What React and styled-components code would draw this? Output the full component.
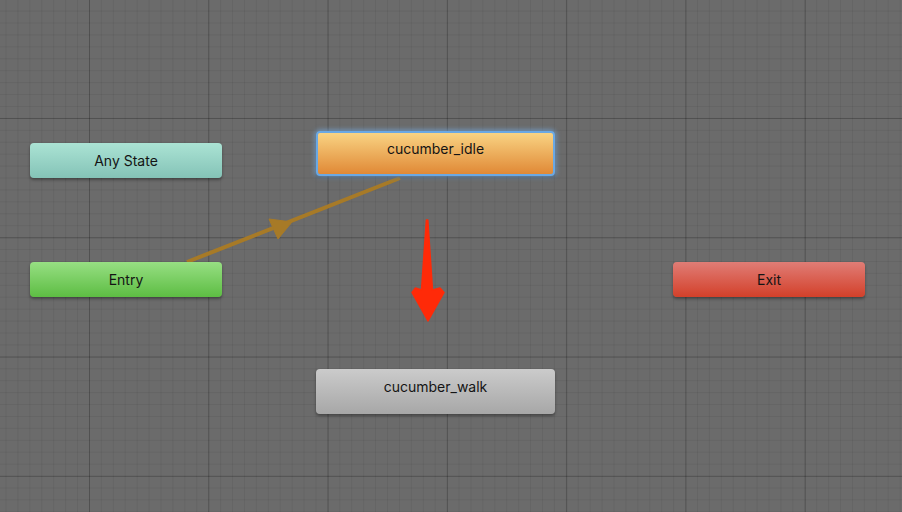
import React from 'react';
import styled, { createGlobalStyle, css } from 'styled-components';

const GlobalStyle = createGlobalStyle`
  html, body {
    margin: 0;
    padding: 0;
    background: #6b6b6b;
  }
  body {
    font-family: "Inter", "Liberation Sans", Arial, sans-serif;
  }
`;

const palettes = {
  any: { top: '#abe3d4', bottom: '#84c3b7' },
  entry: { top: '#97df83', bottom: '#5dbd43' },
  exit: { top: '#e07d76', bottom: '#d3402a' },
  idle: { top: '#f9d383', bottom: '#e08936' },
  walk: { top: '#cbcbcb', bottom: '#a7a7a7' },
};

const Canvas = styled.div`
  position: relative;
  width: 902px;
  height: 512px;
  overflow: hidden;
  background-color: #6b6b6b;
  background-image:
    linear-gradient(to right, rgba(0, 0, 0, 0.2) 1px, transparent 1px),
    linear-gradient(to bottom, rgba(0, 0, 0, 0.2) 1px, transparent 1px),
    linear-gradient(to right, rgba(0, 0, 0, 0.06) 1px, transparent 1px),
    linear-gradient(to bottom, rgba(0, 0, 0, 0.06) 1px, transparent 1px);
  background-size:
    119.3px 119.3px,
    119.3px 119.3px,
    11.93px 11.93px,
    11.93px 11.93px;
  background-position:
    89px 0,
    0 118px,
    5.5px 0,
    0 10.6px;
`;

const Links = styled.svg`
  position: absolute;
  inset: 0;
  width: 902px;
  height: 512px;
  z-index: 1;
`;

const Node = styled.div`
  position: absolute;
  z-index: 2;
  box-sizing: border-box;
  display: flex;
  justify-content: center;
  border-radius: 4px;
  color: #141414;
  font-size: 14px;
  background: linear-gradient(
    to bottom,
    ${(p) => palettes[p.$kind].top},
    ${(p) => palettes[p.$kind].bottom}
  );
  box-shadow: 0 2px 3px rgba(0, 0, 0, 0.35);

  ${(p) =>
    p.$state
      ? css`
          width: 239px;
          height: 45px;
          align-items: flex-start;
          padding-top: 9px;
        `
      : css`
          width: 192px;
          height: 35px;
          align-items: center;
        `}

  ${(p) =>
    p.$selected &&
    css`
      border: 2px solid #6aa8e4;
      padding-top: 7px;
      box-shadow: 0 0 5px 1px rgba(120, 180, 240, 0.7), 0 2px 3px rgba(0, 0, 0, 0.3);
    `}
`;

const nodes = [
  { id: 'any', label: 'Any State', x: 30, y: 143 },
  { id: 'entry', label: 'Entry', x: 30, y: 262 },
  { id: 'exit', label: 'Exit', x: 673, y: 262 },
  { id: 'idle', label: 'cucumber_idle', x: 316, y: 131, state: true, selected: true },
  { id: 'walk', label: 'cucumber_walk', x: 316, y: 369, state: true },
];

const App = () => {
  return (
    <>
      <GlobalStyle />
      <Canvas>
        <Links viewBox="0 0 902 512">
          <line x1="187" y1="262" x2="400" y2="178" stroke="#a77a27" strokeWidth="4" />
          <polygon
            points="292,222 269,219 278,239"
            fill="#a77a27"
            stroke="#a77a27"
            strokeWidth="1"
            strokeLinejoin="round"
          />
          <polygon
            points="426.4,220 427.8,220 432.5,290 440,288 444,292.5 428,321 412,292.5 415.5,288 421.5,290"
            fill="#ff2a08"
            stroke="#ff2a08"
            strokeWidth="1.5"
            strokeLinejoin="round"
          />
        </Links>
        {nodes.map((n) => (
          <Node
            key={n.id}
            $kind={n.id}
            $state={n.state}
            $selected={n.selected}
            style={{ left: n.x, top: n.y }}
          >
            {n.label}
          </Node>
        ))}
      </Canvas>
    </>
  );
};

export default App;
